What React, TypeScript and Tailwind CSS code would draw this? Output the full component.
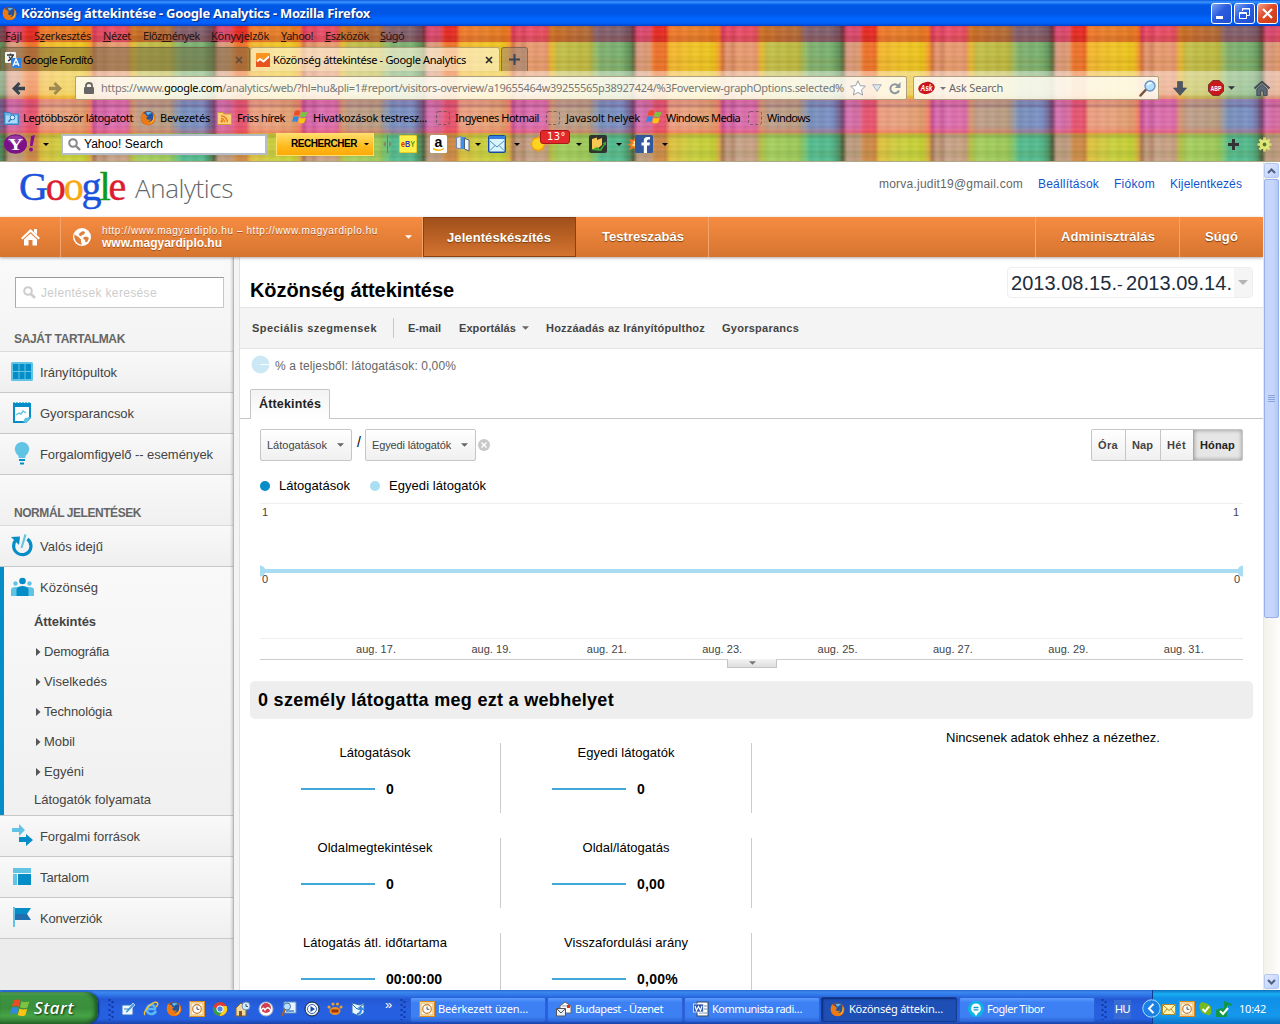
import { useLayoutEffect, useRef } from "react";
import type { ReactNode } from "react";

/* Text set to an exact measure: spreads the letters so the run is `w` pixels wide. */
function Fit({ w, className = "", children }: { w: number; className?: string; children: ReactNode }) {
  const ref = useRef<HTMLSpanElement>(null);
  useLayoutEffect(() => {
    const el = ref.current;
    if (!el) return;
    el.style.letterSpacing = "0px";
    const n = (el.textContent || "").length;
    const natural = el.getBoundingClientRect().width;
    el.style.letterSpacing = `${(w - natural) / n}px`;
  }, [w]);
  return (
    <span className={`block shrink-0 whitespace-nowrap ${className}`}>
      <span ref={ref}>{children}</span>
    </span>
  );
}

function Caret({ className = "fill-[#666]", size = 7 }: { className?: string; size?: number }) {
  return (
    <svg width={size} height={size === 7 ? 4 : size / 2} viewBox="0 0 8 4" className={`block shrink-0 ${className}`}>
      <path d="M0 0H8L4 4Z" />
    </svg>
  );
}

function Firefox({ size = 16 }: { size?: number }) {
  return (
    <svg width={size} height={size} viewBox="0 0 16 16" className="block shrink-0">
      <circle cx="8" cy="8" r="7.3" fill="#c4470c" />
      <circle cx="8.6" cy="6.6" r="5.6" fill="#23539c" />
      <path d="M6 2.5Q9 1 12 3Q9 3.4 8.6 5Q7 5 6 2.5Z" fill="#63b6e8" />
      <path d="M1.2 4.5L2.5 2.2L3.6 4Q5 3.4 6 4.4Q5.6 5.4 6.8 5.9L8.2 6.2L6.4 7.5Q6 9.6 8.4 9.8Q10 9.6 10.8 8.8Q10.6 11 8.4 11.6Q12.6 12 13.4 7.5Q13.6 4.8 12.2 2.6Q15.6 5 15.3 8.8Q14.5 14.6 8.2 15.3Q1.6 15 .8 8.6Q.7 6.4 1.2 4.5Z" fill="#ec7a14" />
      <path d="M13.4 4.8Q15 7.6 13.6 10.8Q12 13.6 8.8 14Q12 12.6 13 9.8Q13.8 7.4 13.4 4.8Z" fill="#fcc83a" />
    </svg>
  );
}

function WinFlag({ size = 16 }: { size?: number }) {
  return (
    <svg width={size} height={size} viewBox="0 0 16 16" className="block shrink-0">
      <path d="M3 2Q6 .5 8.3 2.2L7 7Q4.5 5.5 1.5 7Z" fill="#ee4a23" />
      <path d="M9.2 2.5Q12 4 15.5 2.5L14 7.6Q11 9 7.9 7.4Z" fill="#7dc242" />
      <path d="M1.2 8Q4.2 6.5 6.8 8L5.3 13Q3 11.500 0 13Z" fill="#2f8ae0" />
      <path d="M7.6 8.400Q10.800 10 13.700 8.600L12.300 13.700Q9.200 15.200 6.200 13.500Z" fill="#fbc412" />
    </svg>
  );
}

function OutlookIcon({ size = 16 }: { size?: number }) {
  return (
    <svg width={size} height={size} viewBox="0 0 16 16" className="block shrink-0">
      <rect x=".5" y=".5" width="15" height="15" fill="#fff3d0" stroke="#d88a20" />
      <rect x="2" y="2" width="12" height="12" fill="#fffaf0" stroke="#eab050" />
      <circle cx="8" cy="8" r="4.300" fill="#fff" stroke="#c87c28" strokeWidth="1.200" />
      <path d="M8 5.500V8.300H10.300" fill="none" stroke="#555" />
    </svg>
  );
}

const Dashed = () => (
  <svg width="14" height="14" viewBox="0 0 14 14" className="block">
    <rect x=".5" y=".5" width="13" height="13" rx="2" fill="none" stroke="#5c5148" strokeDasharray="3 2" opacity=".75" />
  </svg>
);

/* Woven plaid of the browser theme. */
function Plaid() {
  return (
    <div className="absolute inset-0 flex flex-col overflow-hidden">
      <div className="h-[16px] bg-[linear-gradient(90deg,#d43860_0px,#e84a60_4px,#dc4460_11px,#e8506c_14px,#e44c5c_33px,#cc7024_38px,#bc6c34_60px,#b06c38_76px,#84606c_83px,#80606c_110px,#6c4452_117px,#7c303c_120px,#d84870_124px,#dc4c6c_136px,#e83028_141px,#e42820_152px,#f0782c_156px,#e8802c_178px,#e47820_200px,#ee6a20_206px,#d43860_209.600px)] bg-[length:209.600px_100%] bg-[position:-115.600px_0]" />
      <div className="h-[58px] bg-[linear-gradient(90deg,#d47448_0px,#e49870_4px,#d88864_10px,#e89c70_14px,#e89870_33px,#e8b42c_38px,#c4c04c_45px,#bcb840_76px,#90b868_83px,#80b070_88px,#78b070_110px,#588850_117px,#646c40_120px,#d89880_124px,#e09c74_136px,#f07830_141px,#ec6c24_152px,#f4b430_156px,#f0c428_178px,#ecc41c_200px,#f49c28_206px,#d47448_209.600px)] bg-[length:209.600px_100%] bg-[position:-115.600px_0]" />
      <div className="h-[34px] bg-[linear-gradient(90deg,#c45098_0px,#dc6cac_4px,#cc60a0_10px,#dc70b0_14px,#dc6ca8_33px,#d4946c_38px,#c0a08c_45px,#b89c80_76px,#8c98b0_83px,#7890bc_88px,#7c90c4_110px,#6c5c88_117px,#7c4470_120px,#d470b0_124px,#d46ca0_136px,#e85878_141px,#e45068_152px,#ec9c80_156px,#e8a480_178px,#e09c6c_200px,#f07c68_206px,#c45098_209.600px)] bg-[length:209.600px_100%] bg-[position:-115.600px_0]" />
      <div className="h-[28px] bg-[linear-gradient(90deg,#a87858_0px,#c49c80_4px,#b88c70_10px,#c8a48c_14px,#c8a080_33px,#b4bc40_38px,#a8d060_45px,#9cc858_76px,#70c47c_83px,#54bc90_88px,#54b88c_110px,#488458_117px,#505c3c_120px,#bc9c80_124px,#c09c80_136px,#d09050_141px,#cc8440_152px,#e0c040_156px,#ccd040_178px,#c4d034_200px,#d8a83c_206px,#a87858_209.600px)] bg-[length:209.600px_100%] bg-[position:-115.600px_0]" />
      <div className="absolute inset-0 bg-[repeating-linear-gradient(90deg,#fff0_0px,#ffffff0c_3px,#fff0_5px,#00000008_8px,#0000_11px)]" />
      <div className="absolute inset-0 bg-[repeating-linear-gradient(0deg,#fff0_0px,#ffffff0e_2px,#fff0_3px,#0000000a_5px)]" />
      <div className="absolute inset-0 bg-[linear-gradient(180deg,#7a200000_8px,#7a200028_13px,#7a200000_17px,#8a600000_30px,#8a600020_36px,#8a600000_39px,#8a60001c_43px,#8a600000_46px,#e0206000_68px,#e0206028_74px,#5010400c_77px,#50104040_80px,#50104000_82px,#ff402000_100px,#ff402040_107px,#40602030_110px,#40602000_114px,#50702000_122px,#50702020_128px,#50702000_131px)]" />
    </div>
  );
}

function TitleBar() {
  return (
    <div className="flex h-[26px] shrink-0 items-center bg-[linear-gradient(180deg,#0a5ae0_0px,#3d95ff_2px,#0058e6_5px,#0055e5_13px,#0066ff_19px,#0061fc_23px,#0040c8_26px)] pl-[2px]">
      <Firefox size={15} />
      <Fit w={349} className="ml-[4px] font-['Noto_Sans'] text-[13px] leading-[26px] font-bold text-white [text-shadow:1px_1px_1px_#0a2a80]">
        Közönség áttekintése - Google Analytics - Mozilla Firefox
      </Fit>
      <div className="mr-[2px] ml-auto flex gap-[2px]">
        <div className="h-[21px] w-[21px] rounded-[3px] border border-white bg-[linear-gradient(135deg,#7ba2f0,#2a5ce0_45%,#1f4fd0)]">
          <svg width="19" height="19"><path d="M4 13.500H11" stroke="#fff" strokeWidth="3" /></svg>
        </div>
        <div className="h-[21px] w-[21px] rounded-[3px] border border-white bg-[linear-gradient(135deg,#7ba2f0,#2a5ce0_45%,#1f4fd0)]">
          <svg width="19" height="19" fill="none" stroke="#fff"><path d="M7.500 7V4.500H14.500V11.500H12M7 5H15" /><path d="M4.500 8.500H11.500V14.500H4.500ZM4 9.500H12" /></svg>
        </div>
        <div className="h-[21px] w-[21px] rounded-[3px] border border-white bg-[linear-gradient(135deg,#f0a088,#e04a26_45%,#c83a14)]">
          <svg width="19" height="19"><path d="M5 5L14 14M14 5L5 14" stroke="#fff" strokeWidth="2.200" /></svg>
        </div>
      </div>
    </div>
  );
}

function MenuBar() {
  return (
    <div className="flex h-[21px] pl-[5px] text-[11px] leading-[20px] text-[#2a1410]">
      <div className="w-[29px]"><Fit w={17}><u>F</u>ájl</Fit></div>
      <div className="w-[69px]"><Fit w={57}>S<u>z</u>erkesztés</Fit></div>
      <div className="w-[40px]"><Fit w={28}><u>N</u>ézet</Fit></div>
      <div className="w-[68px]"><Fit w={57}>Előz<u>m</u>ények</Fit></div>
      <div className="w-[70px]"><Fit w={58}><u>K</u>önyvjelzők</Fit></div>
      <div className="w-[44px]"><Fit w={32}><u>Y</u>ahoo!</Fit></div>
      <div className="w-[55px]"><Fit w={44}><u>E</u>szközök</Fit></div>
      <div><Fit w={24}><u>S</u>úgó</Fit></div>
    </div>
  );
}

function TabStrip() {
  return (
    <div className="flex h-[24px] text-[11px] leading-[24px] text-black">
      <div className="flex h-full w-[250px] items-center rounded-t-[3px] border border-b-0 border-[#6b5a40a0] bg-[#6e664480] pl-[4px]">
        <svg width="16" height="16" viewBox="0 0 16 16" className="mr-[2px]">
          <rect x="0" y="0" width="11" height="11" rx="1" fill="#f4f4f4" />
          <path d="M2 3H9M5.500 1.500V3M3 9Q7 7 8 3M4 4.500Q5 7 8 8" stroke="#333" fill="none" strokeWidth="1.300" />
          <path d="M6 6H16V16H8L6 13Z" fill="#2f80e0" />
          <path d="M8 14L11 7L14 14M9 12H13" stroke="#fff" fill="none" strokeWidth="1.300" />
        </svg>
        <Fit w={70}>Google Fordító</Fit>
        <svg width="8" height="8" className="mr-[6px] ml-auto"><path d="M1 1L7 7M7 1L1 7" stroke="#5c4a3c" strokeWidth="1.500" /></svg>
      </div>
      <div className="flex h-full w-[250px] items-center rounded-t-[3px] border border-b-0 border-[#7a6a4080] bg-[#fff8dca8] pl-[5px]">
        <svg width="14" height="14" viewBox="0 0 14 14" className="mr-[3px]">
          <rect width="14" height="14" rx="1" fill="#f7931e" />
          <path d="M0 8L3.500 6L7 8L13 3L14 4V14H0Z" fill="#e8541c" />
          <path d="M1 8.500L4 6L7.500 8.500L13 3.500" stroke="#fff" strokeWidth="1.800" fill="none" />
        </svg>
        <Fit w={193}>Közönség áttekintése - Google Analytics</Fit>
        <svg width="8" height="8" className="mr-[6px] ml-auto"><path d="M1 1L7 7M7 1L1 7" stroke="#2a2a2a" strokeWidth="1.700" /></svg>
      </div>
      <div className="ml-[1px] flex h-full w-[27px] items-center justify-center rounded-t-[3px] border border-b-0 border-[#5c403080] bg-[#a08c7c90]">
        <svg width="11" height="11"><path d="M5.500 0V11M0 5.500H11" stroke="#3a4656" strokeWidth="2" /></svg>
      </div>
    </div>
  );
}

function NavBar() {
  return (
    <div className="flex h-[34px] items-center bg-[linear-gradient(180deg,#ffffff68_0px,#ffffff50_22px,#ffffff00_28px)] text-[11px]">
      <div className="flex w-[75px] gap-[24px] pl-[12px]">
        <svg width="13" height="13" viewBox="0 0 13 13"><path d="M0 6.500L6.500 0L8.500 2L6 4.800H13V8.200H6L8.500 11L6.500 13Z" fill="#39434f" /></svg>
        <svg width="13" height="13" viewBox="0 0 13 13"><path d="M13 6.500L6.500 0L4.500 2L7 4.800H0V8.200H7L4.500 11L6.500 13Z" fill="#a08a50" /></svg>
      </div>
      <div className="flex h-[24px] w-[832px] items-center rounded-[2px] border border-[#8a7a50b0] bg-[#fffdf2d8] pl-[8px]">
        <svg width="10" height="12" viewBox="0 0 10 12" className="mr-[7px]"><path d="M2 6V3.500Q2 1 5 1Q8 1 8 3.500V6" fill="none" stroke="#666" strokeWidth="1.800" /><rect y="5" width="10" height="7" rx="1" fill="#666" /></svg>
        <Fit w={743} className="w-[749px] leading-[22px] text-[#777]">
          https://www.<span className="text-black">google.com</span>/analytics/web/?hl=hu&amp;pli=1#report/visitors-overview/a19655464w39255565p38927424/%3Foverview-graphOptions.selected%
        </Fit>
        <svg width="16" height="16" viewBox="0 0 16 16"><path d="M8 .8L10.200 5.600L15.400 6.200L11.500 9.800L12.600 15L8 12.400L3.400 15L4.500 9.800L.6 6.200L5.800 5.600Z" fill="#fff" stroke="#9aa0a8" /></svg>
        <svg width="10" height="8" viewBox="0 0 10 8" className="ml-[6px]"><path d="M.7 .7H9.300L5 7.300Z" fill="#dfe6ec" stroke="#a8b0bb" /></svg>
        <svg width="12" height="13" viewBox="0 0 12 13" className="ml-[7px]"><path d="M9.500 4A4.500 4.500 0 1 0 10 8.500" fill="none" stroke="#8f979f" strokeWidth="2" /><path d="M11.500 0V6H5.800Z" fill="#8f979f" /></svg>
      </div>
      <div className="ml-[6px] flex h-[24px] w-[246px] items-center rounded-[2px] border border-[#8a7a50b0] bg-[#fffdf2d8] pl-[4px]">
        <svg width="17" height="14" viewBox="0 0 17 14"><ellipse cx="8.500" cy="7" rx="8.300" ry="6" fill="#c8141c" transform="rotate(-12 8.500 7)" /><text x="2.500" y="10" fontSize="9" fontWeight="bold" fontStyle="italic" fill="#fff" fontFamily="Liberation Sans" textLength="12" lengthAdjust="spacingAndGlyphs">Ask</text></svg>
        <Caret size={6} className="ml-[5px] fill-[#777]" />
        <Fit w={54} className="ml-[3px] leading-[22px] text-[#666]">Ask Search</Fit>
        <svg width="17" height="17" viewBox="0 0 17 17" className="mr-[2px] ml-auto"><path d="M1.500 15.500L7 9.500" stroke="#7a5038" strokeWidth="2.500" strokeLinecap="round" /><circle cx="11" cy="6" r="5" fill="#b4e0ff" stroke="#6a90c0" strokeWidth="1.300" /><path d="M8.500 5Q10 2.500 12.500 3" stroke="#fff" strokeWidth="1.500" fill="none" /></svg>
      </div>
      <svg width="14" height="15" viewBox="0 0 14 15" className="ml-[14px]"><path d="M4.500 .5H9.500V7H13.500L7 14.500L.5 7H4.500Z" fill="#4c5664" stroke="#3a424d" strokeWidth=".6" /></svg>
      <svg width="16" height="16" viewBox="0 0 16 16" className="ml-[21px]"><path d="M4.800 .5H11.200L15.500 4.800V11.200L11.200 15.500H4.800L.5 11.200V4.800Z" fill="#c81818" stroke="#7c3030" /><text x="2.500" y="10.500" fontSize="7" fontWeight="bold" fill="#fff" textLength="11" lengthAdjust="spacingAndGlyphs" fontFamily="Liberation Sans">ABP</text></svg>
      <Caret className="ml-[4px] fill-[#303040]" />
      <svg width="16" height="15" viewBox="0 0 16 15" className="ml-[19px]"><path d="M.5 7.500L8 .8L15.500 7.500" fill="none" stroke="#424d59" strokeWidth="2" /><path d="M2.800 8L8 3.500L13.200 8V14.500H9.500V10H6.500V14.500H2.800Z" fill="#5c6874" stroke="#3a444e" strokeWidth=".8" /></svg>
    </div>
  );
}

function Bookmarks() {
  return (
    <div className="flex h-[26px] items-center pl-[4px] text-[11px] leading-[26px] text-black">
      <div className="w-[19px]"><svg width="15" height="14" viewBox="0 0 15 14"><path d="M.5 1.500H6L7 3H14.500V13.500H.5Z" fill="#6cb4e8" stroke="#3a80c0" /><rect x="2" y="4.500" width="11" height="7.500" fill="#a8dcf8" /><circle cx="8.500" cy="6.500" r="2.300" fill="#d8f0ff" stroke="#3478b8" /><path d="M7 8L4.500 10.800" stroke="#3478b8" strokeWidth="1.400" /></svg></div>
      <Fit w={110} className="w-[117px]">Legtöbbször látogatott</Fit>
      <div className="w-[20px]"><Firefox /></div>
      <Fit w={50} className="w-[57px]">Bevezetés</Fit>
      <div className="w-[20px]"><svg width="15" height="14" viewBox="0 0 15 14"><path d="M.5 1.500H6L7 3H14.500V13.500H.5Z" fill="#fbd078" stroke="#d89830" /><circle cx="4.800" cy="10.300" r="1.200" fill="#e87810" /><path d="M4 7.500A3.500 3.500 0 0 1 7.500 11.300M4 4.800A6.200 6.200 0 0 1 10.300 11.300" stroke="#e87810" strokeWidth="1.300" fill="none" /></svg></div>
      <Fit w={48} className="w-[55px]">Friss hírek</Fit>
      <div className="w-[21px] pb-[3px]"><WinFlag /></div>
      <Fit w={114} className="w-[123px]">Hivatkozások testresz...</Fit>
      <div className="w-[19px]"><Dashed /></div>
      <Fit w={84} className="w-[91px]">Ingyenes Hotmail</Fit>
      <div className="w-[20px]"><Dashed /></div>
      <Fit w={74} className="w-[80px]">Javasolt helyek</Fit>
      <div className="w-[20px] pb-[3px]"><WinFlag /></div>
      <Fit w={74} className="w-[82px]">Windows Media</Fit>
      <div className="w-[19px]"><Dashed /></div>
      <Fit w={43}>Windows</Fit>
    </div>
  );
}

function YahooBar() {
  return (
    <div className="flex h-[24px] items-center pb-[2px] pl-[4px]">
      <svg width="39" height="20" viewBox="0 0 39 20" className="shrink-0">
        <ellipse cx="11.500" cy="10" rx="11.500" ry="9.800" fill="#7b1088" /><ellipse cx="11.500" cy="5.500" rx="8" ry="4" fill="#a850b4" opacity=".6" />
        <text x="4" y="15.500" fontSize="16" fontWeight="bold" fill="#fff" fontFamily="Liberation Serif" textLength="15" lengthAdjust="spacingAndGlyphs">Y</text>
        <path d="M27 2L31 1L28.500 12H26Z" fill="#85108c" /><circle cx="27" cy="15.500" r="1.900" fill="#85108c" />
      </svg>
      <Caret size={6} className="fill-black" />
      <div className="ml-[12px] flex h-[21px] w-[206px] items-center border-2 border-[#b4bcc8] bg-white pl-[5px]">
        <svg width="13" height="13" viewBox="0 0 13 13"><circle cx="5" cy="5" r="3.800" fill="none" stroke="#888" strokeWidth="2" /><path d="M8 8L12 12" stroke="#888" strokeWidth="2.400" /></svg>
        <Fit w={79} className="ml-[3px] font-['Liberation_Sans'] text-[12px] leading-[17px] text-black">Yahoo! Search</Fit>
      </div>
      <div className="ml-[9px] flex h-[23px] w-[98px] items-center border border-[#ffdf70] bg-[linear-gradient(180deg,#ffdd68,#ffb91c_60%,#fcaa08)] pl-[14px]">
        <Fit w={66} className="font-['Liberation_Sans'] text-[10px] leading-[22px] font-bold text-black">RECHERCHER</Fit>
        <Caret size={5} className="ml-[7px] fill-black" />
      </div>
      <svg width="9" height="18" className="ml-[9px]"><path d="M4.500 0V18" stroke="#777" /><path d="M3 6V12L0 9ZM6 6V12L9 9Z" fill="#8a8070" /></svg>
      <svg width="18" height="18" viewBox="0 0 18 18" className="ml-[7px]"><rect width="18" height="18" rx="1.500" fill="#fff04a" stroke="#d8a810" /><text x="2" y="12" fontSize="9" fontWeight="bold" fontFamily="Liberation Sans" textLength="14" lengthAdjust="spacingAndGlyphs"><tspan fill="#e01818">e</tspan><tspan fill="#2038d0">B</tspan><tspan fill="#5a9a10">Y</tspan></text></svg>
      <svg width="17" height="18" viewBox="0 0 17 18" className="ml-[13px]"><rect width="17" height="18" rx="1.500" fill="#fff" /><text x="4.500" y="12" fontSize="14" fontWeight="bold" fontFamily="Liberation Sans">a</text><path d="M3 13.500Q9 17 14 13.500" fill="none" stroke="#f4b810" strokeWidth="1.500" /></svg>
      <svg width="14" height="16" viewBox="0 0 14 16" className="ml-[9px]"><path d="M.5 1.500L5 .5V13L.5 12Z" fill="#e4ecf8" stroke="#7088b0" /><path d="M5 1H10V13H5Z" fill="#3c90e8" /><path d="M8.500 2.500L13 4V15L8.500 13Z" fill="#f4f8ff" stroke="#48607c" /></svg>
      <Caret size={6} className="ml-[5px] fill-black" />
      <svg width="18" height="18" viewBox="0 0 18 18" className="ml-[7px]"><rect x=".7" y=".7" width="16.600" height="16.600" rx="1.500" fill="#d8f4ff" stroke="#1848a8" strokeWidth="1.400" /><rect x="1" y="1" width="16" height="3" fill="#3480e0" /><path d="M2 6L9 12L16 6M2 15.500L7 10.500M16 15.500L11 10.500" fill="none" stroke="#5090b8" /></svg>
      <Caret size={6} className="ml-[8px] fill-black" />
      <div className="relative ml-[9px] h-[18px] w-[18px]">
        <svg width="18" height="18" viewBox="0 0 18 18"><path d="M9 1L11 3.500L14.500 3L14.500 6.500L17 9L14.500 11.500V15H11L9 17L7 15H3.500V11.500L1 9L3.500 6.500V3H7Z" fill="#f4a008" /><circle cx="9" cy="9" r="5.800" fill="#ffd420" /></svg>
        <div className="absolute -top-[5px] left-[11px] h-[14px] w-[30px] rounded-[3px] border border-[#a81818] bg-[#e4282c] pl-[6px] text-white">
          <Fit w={19} className="font-['DejaVu_Sans'] text-[10px] leading-[12px]">13°</Fit>
        </div>
      </div>
      <Caret size={6} className="ml-[29px] fill-black" />
      <svg width="18" height="18" viewBox="0 0 18 18" className="ml-[7px]"><rect width="18" height="18" rx="2" fill="#303430" /><path d="M3 4L8 2.500V5L13 3V10L8 14H3Z" fill="#f8c850" /><path d="M2 15L8 12L11 14L15 9L13.500 8.500L17 6.500V10.500L16 9.800L12 16Z" fill="#40a830" /></svg>
      <Caret size={6} className="ml-[9px] fill-black" />
      <svg width="26" height="18" viewBox="0 0 26 18" className="ml-[5px]"><path d="M9 2L6 5L2 4L4 8L0 10L4 11L2 15L7 13L10 16Z" fill="#f07820" /><path d="M9 5L6 7L7 9L4 10L7 11L10 13Z" fill="#ffe890" /><rect x="8" width="18" height="18" rx="1.500" fill="#31579c" /><path d="M20 18V10.500H22.500L23 7.500H20V6Q20 4.500 21.500 4.500H23V2H20.500Q16.800 2 16.800 5.500V7.500H14.500V10.500H16.800V18Z" fill="#fff" /></svg>
      <Caret size={6} className="ml-[9px] fill-black" />
      <svg width="11" height="11" className="mr-[18px] ml-auto"><path d="M5.500 0V11M0 5.500H11" stroke="#333" strokeWidth="3" /></svg>
      <svg width="15" height="15" viewBox="0 0 15 15" className="mr-[8px]"><g stroke="#d8e070" strokeWidth="2.600"><path d="M7.500 .5V14.500M.5 7.500H14.500M2.500 2.500L12.500 12.500M12.500 2.500L2.500 12.500" /></g><circle cx="7.500" cy="7.500" r="5" fill="#e0e878" /><circle cx="7.500" cy="7.500" r="1.900" fill="#567834" /></svg>
    </div>
  );
}

const navText = "text-white font-bold text-[13px] [text-shadow:0_1px_1px_#7a3c08]";

function GaHeader() {
  return (
    <>
      <div className="flex h-[55px]">
        <Fit w={105} className="ml-[19px] w-[116px] font-['Liberation_Serif'] text-[40px] leading-[50px] [-webkit-text-stroke-width:0.5px]">
          <span className="text-[#1a52dc]">G</span><span className="text-[#dc1c30]">o</span><span className="text-[#f8a810]">o</span><span className="text-[#1a52dc]">g</span><span className="text-[#109820]">l</span><span className="text-[#dc1c30]">e</span>
        </Fit>
        <Fit w={98} className="font-['Open_Sans'] text-[26px] leading-[53px] font-light text-[#64676a]">Analytics</Fit>
        <div className="mr-[21px] ml-auto flex gap-[15px] text-[12px] leading-[44px] text-[#15c]">
          <Fit w={144} className="text-[#666]">morva.judit19@gmail.com</Fit>
          <Fit w={61}>Beállítások</Fit>
          <Fit w={41}>Fiókom</Fit>
          <Fit w={72}>Kijelentkezés</Fit>
        </div>
      </div>
      <div className="relative z-10 flex h-[40px] shrink-0 bg-[linear-gradient(180deg,#f68c42,#d6742f)] leading-[40px] shadow-[0_1px_3px_#0005]">
        <div className="flex w-[61px] items-center justify-center border-r border-[#f4a56c]">
          <svg width="19" height="17" viewBox="0 0 19 17" fill="#fff"><path d="M9.500 0L19 9L17.500 10.500L9.500 3L1.500 10.500L0 9Z" /><path d="M13 0H16V6L13 3Z" /><path d="M3 10.500L9.500 4.500L16 10.500V16.500H11.500V11H7.500V16.500H3Z" /></svg>
        </div>
        <div className="flex w-[362px] items-center border-r border-[#f4a56c] pl-[12px]">
          <svg width="18" height="18" viewBox="0 0 18 18"><circle cx="9" cy="9" r="9" fill="#fff" /><path d="M1.500 6Q3 8 5 8.500L8 11.500V14L9 16.800Q4 16 2.200 12Q.6 9 1.500 6ZM8 4L10.500 3L12 4.500L11 6.500L9 7L8 8.500L6.500 7.500L5.500 6.500ZM11 9L13.500 8.500L16 10L14.500 13.500L12.500 14.500L12 12L10 10.500Z" fill="#e0803a" /></svg>
          <div className="ml-[11px] text-white">
            <Fit w={276} className="text-[10px] leading-[12px] [text-shadow:0_1px_0_#a85018]">http://www.magyardiplo.hu – http://www.magyardiplo.hu</Fit>
            <Fit w={120} className="text-[12px] leading-[13px] font-bold [text-shadow:0_1px_0_#a85018]">www.magyardiplo.hu</Fit>
          </div>
          <Caret className="mr-[10px] ml-auto fill-white" />
        </div>
        <div className="w-[153px] border border-[#8a4010] bg-[linear-gradient(180deg,#a0501a,#d47330)] pl-[23px] leading-[39px]"><Fit w={104} className={navText}>Jelentéskészítés</Fit></div>
        <div className="w-[133px] border-r border-[#f4a56c] pl-[26px]"><Fit w={82} className={navText}>Testreszabás</Fit></div>
        <div className="ml-auto w-[144px] border-l border-[#f4a56c] pl-[25px]"><Fit w={94} className={navText}>Adminisztrálás</Fit></div>
        <div className="w-[84px] border-l border-[#f4a56c] pl-[25px]"><Fit w={33} className={navText}>Súgó</Fit></div>
      </div>
    </>
  );
}

function SideItem({ icon, label, w }: { icon: ReactNode; label: string; w: number }) {
  return (
    <div className="flex h-[41px] items-center border-b border-[#c8c8c8] bg-linear-to-b from-[#f9f9f9] to-[#efefef]">
      <div className="flex w-[40px] justify-start pb-[2px] pl-[11px]">{icon}</div>
      <Fit w={w} className="pt-[1px] text-[13px] text-[#444]">{label}</Fit>
    </div>
  );
}

function SubItem({ label, w }: { label: string; w: number }) {
  return (
    <div className="flex h-[30px] items-center pl-[32px]">
      <svg width="5" height="8" className="mr-[3px]"><path d="M0 0L4.500 4L0 8Z" fill="#555" /></svg>
      <Fit w={w}>{label}</Fit>
    </div>
  );
}

const L = "#62c4e4";
const D = "#058dc7";

function Sidebar() {
  return (
    <div className="flex w-[233px] flex-col bg-[#ececec]">
      <div className="h-[95px] border-b border-[#dcdcdc] bg-linear-to-b from-[#fafafa] to-[#f3f3f3] pt-[20px]">
        <div className="ml-[15px] flex h-[31px] w-[209px] items-center border border-[#c8c8c8] border-t-[#999] border-l-[#aaa] bg-white pl-[7px]">
          <svg width="13" height="13" viewBox="0 0 13 13"><circle cx="5" cy="5" r="3.800" fill="none" stroke="#ccc" strokeWidth="2" /><path d="M8 8L12 12" stroke="#ccc" strokeWidth="2.600" /></svg>
          <Fit w={116} className="ml-[5px] text-[12px] text-[#ccc]">Jelentések keresése</Fit>
        </div>
        <Fit w={111} className="pt-[22px] pl-[14px] text-[12px] font-bold text-[#666]">SAJÁT TARTALMAK</Fit>
      </div>
      <SideItem label="Irányítópultok" w={77} icon={<svg width="22" height="19"><rect width="22" height="19" rx="1.500" fill={L} /><path d="M2 2H7.500V9H2ZM8.500 2H13.500V9H8.500ZM14.500 2H20V9H14.500ZM2 10H7.500V17H2ZM8.500 10H13.500V17H8.500ZM14.500 10H20V17H14.500Z" fill={D} /></svg>} />
      <SideItem label="Gyorsparancsok" w={94} icon={<svg width="22" height="21"><path d="M2 1H20V16L15 21H2Z" fill={D} /><path d="M2 .5H20" stroke={L} strokeDasharray="2 1" /><path d="M4 5H18V15L14 19H4Z" fill="#fff" /><path d="M5 13L8 11L10 12L12 9L15 11" stroke={L} strokeWidth="1.500" fill="none" /><path d="M12 20L14 16L20 15L15 21Z" fill={L} /></svg>} />
      <SideItem label="Forgalomfigyelő -- események" w={173} icon={<svg width="22" height="24"><path d="M11 1A7.300 7.300 0 0 1 18.300 8Q18 12 14.500 15V17H7.500V15Q4 12 3.700 8A7.300 7.300 0 0 1 11 1Z" fill={L} /><path d="M8 19H14M9 22.500H13" stroke={D} strokeWidth="2" /></svg>} />
      <div className="h-[51px] border-b border-[#dcdcdc] bg-linear-to-b from-[#f9f9f9] to-[#f0f0f0] pt-[29px]">
        <Fit w={127} className="pl-[14px] text-[12px] font-bold text-[#666]">NORMÁL JELENTÉSEK</Fit>
      </div>
      <SideItem label="Valós idejű" w={63} icon={<svg width="22" height="24" viewBox="0 0 22 24"><path d="M5.500 6Q1 11 3.500 17Q7 22.500 13.500 21.500Q19.500 19.500 20 13.500Q20 9 16.500 6" fill="none" stroke={D} strokeWidth="3.200" /><path d="M0 4L9 3.500L8 12Z" fill={D} /><path d="M13.500 1L15.500 2L11.500 15H9.500Z" fill={L} /></svg>} />
      <div className="h-[249px] border-b border-[#c8c8c8] bg-linear-to-b from-[#f9f9f9] to-[#f0f0f0]">
        <div className="flex h-[248px] flex-col border-l-4 border-[#058dc7] text-[13px] text-[#444]">
          <div className="flex h-[40px] items-center">
            <div className="w-[36px] pb-[2px] pl-[7px]"><svg width="23" height="19"><circle cx="11.500" cy="4" r="3.300" fill={D} /><circle cx="4.500" cy="6.500" r="2.200" fill={L} /><circle cx="18.500" cy="6.500" r="2.200" fill={L} /><path d="M0 19V12Q1 10 4.500 10H18.500Q22 10 23 12V19Z" fill={L} /><path d="M5.500 19V12Q7 9 11.500 9Q16 9 17.500 12V19Z" fill={D} /></svg></div>
            <Fit w={58} className="pt-[2px]">Közönség</Fit>
          </div>
          <div className="flex h-[30px] items-center pl-[30px] font-bold"><Fit w={62}>Áttekintés</Fit></div>
          <SubItem label="Demográfia" w={65} />
          <SubItem label="Viselkedés" w={63} />
          <SubItem label="Technológia" w={68} />
          <SubItem label="Mobil" w={31} />
          <SubItem label="Egyéni" w={40} />
          <div className="flex h-[26px] items-center pl-[30px]"><Fit w={117}>Látogatók folyamata</Fit></div>
        </div>
      </div>
      <SideItem label="Forgalmi források" w={100} icon={<svg width="22" height="22" viewBox="0 0 22 22"><path d="M1 4H8V0L14 6L8 12V8H1Z" fill={L} /><path d="M8 13H15V10L22 16L15 22V18H8Z" fill={D} /></svg>} />
      <SideItem label="Tartalom" w={49} icon={<svg width="22" height="17"><path d="M2 0H20V5H2ZM2 6H6V17H2Z" fill={L} /><path d="M7 6H20V17H7Z" fill={D} /></svg>} />
      <SideItem label="Konverziók" w={62} icon={<svg width="22" height="20"><path d="M4 1H20L16 7H4Z" fill={D} /><path d="M4 7H16L20 13H4Z" fill="#2070b0" /><path d="M2 0H4V20H2Z" fill={L} /></svg>} />
    </div>
  );
}

function Metric({ label, lw, value, vw }: { label: string; lw: number; value: string; vw: number }) {
  return (
    <div className="h-[70px] w-[251px] shrink-0 border-r border-[#ccc] text-[13px] text-black">
      <div className="flex h-[19px] items-center justify-center"><Fit w={lw}>{label}</Fit></div>
      <div className="mt-[17px] flex h-[20px] items-center pl-[51px]">
        <div className="h-[2px] w-[74px] bg-[#40a8d8]" />
        <Fit w={vw} className="ml-[11px] text-[14px] font-bold">{value}</Fit>
      </div>
    </div>
  );
}

const selectBox = "flex h-[32px] items-center rounded-[2px] border border-[#c6c6c6] bg-linear-to-b from-white to-[#f0f0f0] pl-[6px] text-[11px] text-[#444]";
const dates = ["aug. 17.", "aug. 19.", "aug. 21.", "aug. 23.", "aug. 25.", "aug. 27.", "aug. 29.", "aug. 31."];

function Report() {
  return (
    <div className="min-w-0 flex-1 overflow-hidden bg-white">
      <div className="flex h-[50px]">
        <Fit w={204} className="pt-[18px] pl-[10px] text-[20px] leading-[30px] font-bold text-black">Közönség áttekintése</Fit>
        <div className="mt-[10px] mr-[10px] ml-auto flex h-[31px] w-[246px] rounded-[4px] border border-[#eee] pl-[3px]">
          <Fit w={106} className="text-[20px] leading-[31px] text-[#1c2c3c]">2013.08.15.</Fit>
          <Fit w={115} className="text-[20px] leading-[31px] text-[#1c2c3c]"><span className="text-[17px]">-</span><span className="text-[12px]"> </span>2013.09.14.</Fit>
          <div className="ml-auto flex w-[18px] items-center justify-center bg-[#f5f5f5]"><Caret size={10} className="fill-[#b4b4b4]" /></div>
        </div>
      </div>
      <div className="flex h-[42px] items-center border-y border-[#e2e2e2] bg-[#f4f4f4] pl-[12px] text-[11px] font-bold text-[#444]">
        <Fit w={125} className="w-[141px]">Speciális szegmensek</Fit>
        <div className="h-[20px] w-[15px] border-l border-[#c8c8c8]" />
        <Fit w={33} className="w-[51px]">E-mail</Fit>
        <Fit w={57} className="w-[63px]">Exportálás</Fit>
        <Caret className="mr-[17px] fill-[#666]" />
        <Fit w={159} className="w-[176px]">Hozzáadás az Irányítópulthoz</Fit>
        <Fit w={77}>Gyorsparancs</Fit>
      </div>
      <div className="flex h-[40px] pt-[6px] pl-[11px]">
        <svg width="19" height="19"><circle cx="9.500" cy="9.500" r="9" fill="#cbe8f4" /><path d="M9.500 9.500H18.500" stroke="#fff" /></svg>
        <Fit w={181} className="ml-[5px] text-[12px] leading-[23px] text-[#666]">% a teljesből: látogatások: 0,00%</Fit>
      </div>
      <div className="flex h-[30px]">
        <div className="w-[10px] border-b border-[#c6c6c6]" />
        <div className="w-[80px] rounded-t-[2px] border border-b-0 border-[#c6c6c6] bg-linear-to-b from-[#f3f3f3] to-white pl-[8px]"><Fit w={62} className="text-[12.500px] leading-[29px] font-bold text-[#222]">Áttekintés</Fit></div>
        <div className="flex-1 border-b border-[#c6c6c6]" />
      </div>
      <div className="flex h-[42px] items-end pr-[20px] pl-[20px]">
        <div className={`w-[92px] ${selectBox}`}><Fit w={60}>Látogatások</Fit><Caret className="mr-[7px] ml-auto fill-[#666]" /></div>
        <Fit w={4} className="mx-[5px] w-[3px] pb-[8px] text-[14px] text-black">/</Fit>
        <div className={`w-[111px] ${selectBox}`}><Fit w={79}>Egyedi látogatók</Fit><Caret className="mr-[7px] ml-auto fill-[#666]" /></div>
        <svg width="12" height="12" className="mb-[10px] ml-[2px]"><circle cx="6" cy="6" r="6" fill="#c8c8c8" /><path d="M3.500 3.500L8.500 8.500M8.500 3.500L3.500 8.500" stroke="#fff" strokeWidth="1.400" /></svg>
        <div className="ml-auto flex h-[32px] w-[152px] overflow-hidden rounded-[2px] border border-[#c6c6c6] bg-linear-to-b from-white to-[#f0f0f0] text-[11px] leading-[30px] font-bold text-[#444]">
          <div className="w-[34px] border-r border-[#c6c6c6] pl-[6px]"><Fit w={20}>Óra</Fit></div>
          <div className="w-[35px] border-r border-[#c6c6c6] pl-[6px]"><Fit w={21}>Nap</Fit></div>
          <div className="w-[32px] pl-[6px]"><Fit w={19}>Hét</Fit></div>
          <div className="flex-1 border-l border-[#aaa] bg-[#e6e6e6] pl-[6px] text-[#222] shadow-[inset_0_0_4px_#0006]"><Fit w={35}>Hónap</Fit></div>
        </div>
      </div>
      <div className="flex h-[42px] items-center pt-[8px] pl-[20px] text-[13px] text-black">
        <div className="mr-[9px] h-[10px] w-[10px] rounded-full bg-[#058dc7]" /><Fit w={71} className="w-[91px]">Látogatások</Fit>
        <div className="mr-[9px] h-[10px] w-[10px] rounded-full bg-[#aadff3]" /><Fit w={97}>Egyedi látogatók</Fit>
      </div>
      <div className="ml-[20px] h-[136px] w-[983px] border-y border-[#eee] text-[11px] leading-[17px] text-[#444]">
        <div className="flex justify-between px-[2px] pr-[4px]"><span>1</span><span>1</span></div>
        <svg width="983" height="12" className="mt-[44px] block"><path d="M0 6H983" stroke="#a8dcf2" strokeWidth="4" /><circle cx="0" cy="6" r="5.500" fill="#a8dcf2" /><circle cx="983" cy="6" r="5.500" fill="#a8dcf2" /></svg>
        <div className="-mt-[6px] flex justify-between px-[2px] pr-[3px]"><span>0</span><span>0</span></div>
      </div>
      <div className="ml-[20px] flex h-[21px] w-[983px] border-b border-[#ccc] pl-[96px] text-[11px] leading-[21px] text-[#444]">
        {dates.map((d) => <Fit key={d} w={40} className="w-[115.400px]">{d}</Fit>)}
      </div>
      <div className="-mt-[1px] flex h-[22px] pl-[487px]">
        <div className="flex h-[9px] w-[50px] items-center justify-center rounded-b-[1px] border border-t-0 border-[#c4c4c4] bg-linear-to-b from-[#f4f4f4] to-[#dedede]"><Caret className="fill-[#777]" /></div>
      </div>
      <div className="ml-[10px] h-[38px] w-[1003px] rounded-[5px] bg-[#eee] pl-[8px]"><Fit w={356} className="text-[18px] leading-[39px] font-bold text-black">0 személy látogatta meg ezt a webhelyet</Fit></div>
      <div className="flex pt-[24px] pl-[10px]">
        <div className="grid grid-cols-[251px_251px] gap-y-[25px]">
          <Metric label="Látogatások" lw={71} value="0" vw={8} />
          <Metric label="Egyedi látogatók" lw={97} value="0" vw={8} />
          <Metric label="Oldalmegtekintések" lw={115} value="0" vw={8} />
          <Metric label="Oldal/látogatás" lw={87} value="0,00" vw={28} />
          <Metric label="Látogatás átl. időtartama" lw={144} value="00:00:00" vw={56} />
          <Metric label="Visszafordulási arány" lw={124} value="0,00%" vw={41} />
        </div>
        <Fit w={214} className="-mt-[15px] pl-[194px] text-[13px] leading-[20px] text-black">Nincsenek adatok ehhez a nézethez.</Fit>
      </div>
    </div>
  );
}

const sbButton = "flex h-[15px] w-[15px] items-center justify-center rounded-[2px] border border-[#b4c8f4] bg-[linear-gradient(135deg,#e0e8ff,#bccffa)]";

function Scrollbar() {
  return (
    <div className="flex h-full w-[17px] flex-col border-l border-[#e8e8e4] bg-[linear-gradient(90deg,#f2f1ea,#fefefb)] pt-[1px]">
      <div className={sbButton}><svg width="9" height="6"><path d="M1 5L4.500 1.500L8 5" fill="none" stroke="#4d6185" strokeWidth="2" /></svg></div>
      <div className="mt-[1px] flex h-[439px] w-[15px] flex-col items-center justify-center gap-[1px] rounded-[2px] border border-[#98b0ec] bg-[linear-gradient(90deg,#c8d6fb,#c6d6fc_60%,#b4c8f4)]">
        <i className="h-[1px] w-[7px] bg-[#8ba4e0]" /><i className="h-[1px] w-[7px] bg-[#8ba4e0]" /><i className="h-[1px] w-[7px] bg-[#8ba4e0]" /><i className="h-[1px] w-[7px] bg-[#8ba4e0]" />
      </div>
      <div className={`mt-auto mb-[1px] ${sbButton}`}><svg width="9" height="6"><path d="M1 1L4.500 4.500L8 1" fill="none" stroke="#4d6185" strokeWidth="2" /></svg></div>
    </div>
  );
}

const Grip = () => (
  <svg width="6" height="22" className="block shrink-0"><path d="M1.500 1V22M4.500 3V22" stroke="#1038a0" strokeWidth="2" strokeDasharray="2 3" /></svg>
);

function Task({ icon, label, w, active = false }: { icon: ReactNode; label: string; w: number; active?: boolean }) {
  return (
    <div className={`flex h-[25px] w-[136px] items-center rounded-[2px] border pl-[8px] ${active ? "border-[#163a90] bg-[#1e4fb4] shadow-[inset_1px_1px_2px_#0c2c78]" : "border-[#2c62d8] bg-[linear-gradient(180deg,#5c9cff,#3c80f4_20%,#3c80f4_80%,#2f68d8)]"}`}>
      <div className="w-[19px]">{icon}</div>
      <Fit w={w} className="font-['Noto_Sans'] text-[11px] leading-[20px] text-white">{label}</Fit>
    </div>
  );
}

function Taskbar() {
  return (
    <div className="flex h-[34px] items-center overflow-hidden bg-[linear-gradient(180deg,#2a66d0_0px,#3a88f0_2px,#3078e8_5px,#2458d4_9px,#2660e0_18px,#2560e0_29px,#1a44a8_34px)] pt-[4px] text-white">
      <div className="-mt-[4px] flex h-[32px] w-[98px] shrink-0 items-center self-end rounded-r-[12px] bg-[linear-gradient(180deg,#6cb86c_0px,#3c9440_4px,#3a8e3c_16px,#46a446_24px,#2c7030_32px)] pl-[10px] shadow-[inset_-3px_0_4px_#1c5420,1px_0_2px_#0a2a70]">
        <WinFlag size={20} />
        <Fit w={40} className="ml-[4px] font-['Noto_Sans'] text-[17px] leading-[28px] font-medium italic [text-shadow:1px_1px_2px_#0c300c]">Start</Fit>
      </div>
      <div className="ml-[10px]"><Grip /></div>
      <div className="ml-[6px] flex w-[274px] items-center gap-[7px]">
        <svg width="16" height="16"><rect x="2" y="4" width="11" height="10" rx="1" fill="#eef6ff" stroke="#3070c0" /><path d="M5 11L13 2L15 4L7 12Z" fill="#48a0e0" stroke="#fff" strokeWidth=".6" /><path d="M4 8H9" stroke="#4080c0" /></svg>
        <svg width="16" height="16"><path d="M13 10Q11 13.500 7.500 13Q3.500 12 4 8Q5 4 8.500 4Q12.500 4.500 12 8H5" fill="none" stroke="#58b8f8" strokeWidth="2.600" /><path d="M2 14Q0 12 5 6Q11 0 14 1.500Q16 3 13 6" fill="none" stroke="#f8c030" strokeWidth="1.400" /></svg>
        <Firefox />
        <OutlookIcon />
        <svg width="16" height="16"><circle cx="8" cy="8" r="7" fill="#e03c30" /><path d="M1.500 5.500A7 7 0 0 0 7.500 15L10.500 9L5 9Z" fill="#30a04c" /><path d="M8 5H14.500A7 7 0 0 1 7.500 15L11 8Z" fill="#fcd020" /><circle cx="8" cy="8" r="3.200" fill="#4888f0" stroke="#fff" /></svg>
        <svg width="16" height="16"><path d="M1 7L6 2L11 7V15H1Z" fill="#f0d8a0" stroke="#8a6020" /><path d="M4 15V10H7V15Z" fill="#805020" /><circle cx="11" cy="5" r="4" fill="#d0ecff" stroke="#7090b8" /><path d="M11 3V5.500H13" stroke="#456" fill="none" /></svg>
        <svg width="16" height="16"><circle cx="8" cy="8" r="7" fill="#fff" stroke="#a0b0c8" /><circle cx="8" cy="7" r="5" fill="#d04050" /><path d="M3 10Q5 5 7 9Q10 4 13 10" stroke="#fff" strokeWidth="1.400" fill="none" /></svg>
        <svg width="16" height="16"><path d="M3 1H15V12H3Z" fill="#e8f4ff" stroke="#6090c0" /><path d="M5 10H13" stroke="#68a0d8" strokeWidth="2" /><circle cx="6" cy="5.500" r="3.500" fill="#b8e0ff" stroke="#4878a8" /><path d="M4 8L1 15" stroke="#a06030" strokeWidth="2" /></svg>
        <svg width="16" height="16"><circle cx="8" cy="8" r="7" fill="#e8f0f8" stroke="#101828" /><circle cx="8" cy="8" r="4.500" fill="#fff" stroke="#3468b8" /><path d="M6.500 5L11 8L6.500 11Z" fill="#1848a8" /></svg>
        <svg width="16" height="16"><ellipse cx="8" cy="10" rx="5.500" ry="4" fill="#e89020" /><circle cx="2" cy="6" r="1.500" fill="#f0a030" /><circle cx="6" cy="3" r="1.500" fill="#f0a030" /><circle cx="10.500" cy="3" r="1.500" fill="#f0a030" /><circle cx="14" cy="6" r="1.500" fill="#f0a030" /><path d="M4.500 10H11.500" stroke="#a03010" strokeWidth="3" /></svg>
        <svg width="16" height="16"><path d="M2 2L10 4L14 2V12L9 15L2 12Z" fill="#e8f4ff" stroke="#3070b8" /><path d="M2 3L7 8L14 3" fill="none" stroke="#3070b8" /><path d="M7 14Q12 14 12 9H14.500L11 5L7.500 9H10Q9.500 12 7 12Z" fill="#3088e0" /></svg>
        <span className="ml-[12px] pb-[9px] text-[13px] leading-[14px]">»</span>
      </div>
      <div className="ml-[6px]"><Grip /></div>
      <div className="ml-[4px] flex gap-[1px]">
        <Task label="Beérkezett üzen…" w={90} icon={<OutlookIcon />} />
        <Task label="Budapest - Üzenet" w={88} icon={<svg width="16" height="16"><path d="M4 5L9 1L15 5V12H4Z" fill="#fff" stroke="#666" /><path d="M6 5H12" stroke="#999" /><rect x="11" y="4" width="3" height="3" fill="#e03020" /><path d="M.5 7.500H9.500V15H.5Z" fill="#e8eef8" stroke="#555" /><path d="M1 8L5 12L9 8" stroke="#555" fill="none" /></svg>} />
        <Task label="Kommunista radi…" w={90} icon={<svg width="16" height="16"><rect x="4" y="1" width="11" height="14" fill="#fff" stroke="#345" /><path d="M11 5H14M11 8H14M6 12H14" stroke="#7890b0" /><rect x=".5" y="3" width="10" height="8" fill="#3058b0" stroke="#fff" strokeWidth=".7" /><path d="M2 5L3.500 9.500L5.500 5.500L7.500 9.500L9 5" stroke="#fff" fill="none" strokeWidth="1.200" /></svg>} />
        <Task active label="Közönség áttekin…" w={94} icon={<Firefox size={15} />} />
        <div className="ml-[1px]"><Task label="Fogler Tibor" w={57} icon={<svg width="16" height="16"><circle cx="8" cy="8" r="8" fill="#10b4e4" /><path d="M8 2.500A5 5 0 0 1 10 12L8 15L6 12A5 5 0 0 1 8 2.500Z" fill="#fff" /><path d="M5.500 6.500H10.500M5.500 8.800H10.500" stroke="#10a0d0" strokeWidth="1.300" /></svg>} /></div>
      </div>
      <div className="ml-[6px]"><Grip /></div>
      <div className="ml-[7px] h-[19px] w-[17px] bg-[#386cd4]"><Fit w={15} className="pl-[1px] text-[11px] leading-[19px]">HU</Fit></div>
      <div className="relative -mt-[4px] ml-auto flex h-[34px] w-[128px] items-center self-stretch border-l border-[#103c90] bg-[linear-gradient(180deg,#1070c0_0px,#18b0f4_4px,#1090e8_8px,#1498ec_26px,#0c70c4_34px)] pt-[4px]">
        <svg width="19" height="19" className="absolute top-[9px] -left-[11px]"><circle cx="9.500" cy="9.500" r="8.700" fill="#1c80e4" stroke="#a8dcfc" /><path d="M11.500 5L7 9.500L11.500 14" fill="none" stroke="#fff" strokeWidth="2" /></svg>
        <div className="ml-[9px] flex items-center gap-[3px]">
          <svg width="14" height="16"><rect x=".5" y="3.500" width="13" height="10" fill="#fff4b0" stroke="#b08828" /><path d="M1 4L7 9.500L13 4M1 13L5 8M13 13L9 8" fill="none" stroke="#b08828" /></svg>
          <OutlookIcon size={16} />
          <svg width="15" height="16"><path d="M4 1Q8 2 10 3Q14 5 13 9Q14 12 12 14Q10 15 8 13Q3 13 2 8Q0 3 4 1Z" fill="#78b820" /><path d="M4.500 8L7 10.500L11 5.500" stroke="#fff" strokeWidth="2" fill="none" /></svg>
          <svg width="16" height="16"><path d="M8 0L16 3L15 5L11 4V16H0V9L5 7L8 8Z" fill="#109848" /><path d="M4 10L7 13L12 7" stroke="#fff" strokeWidth="2" fill="none" /></svg>
        </div>
        <Fit w={27} className="ml-[7px] font-['Noto_Sans'] text-[11px] leading-[20px]">10:42</Fit>
      </div>
    </div>
  );
}

export default function App() {
  return (
    <div className="flex h-[1024px] w-[1280px] flex-col overflow-hidden bg-white font-['Liberation_Sans',sans-serif]">
      <TitleBar />
      <div className="relative h-[136px] shrink-0 border-b border-[#b0a888]">
        <Plaid />
        <div className="relative font-['Noto_Sans']">
          <MenuBar />
          <TabStrip />
          <NavBar />
          <Bookmarks />
          <div className="mt-[2px]"><YahooBar /></div>
        </div>
      </div>
      <div className="flex h-[828px] shrink-0">
        <div className="flex h-full w-[1263px] flex-col overflow-hidden">
          <GaHeader />
          <div className="flex min-h-0 flex-1">
            <Sidebar />
            <div className="w-[7px] shrink-0 border-r border-l border-r-[#e0e0e0] border-l-[#b8b8b8] bg-[#f4f4f4] shadow-[-1px_0_3px_#0003]" />
            <Report />
          </div>
        </div>
        <Scrollbar />
      </div>
      <Taskbar />
    </div>
  );
}
